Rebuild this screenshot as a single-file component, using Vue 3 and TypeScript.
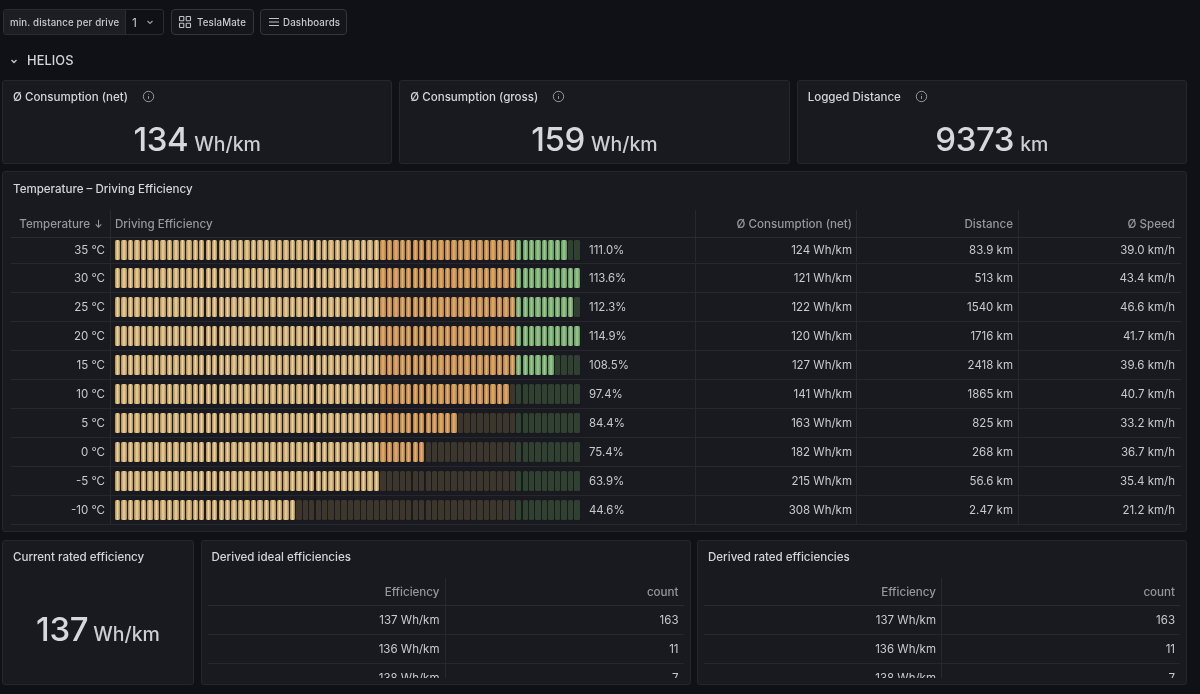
<script setup lang="ts">
interface Row { temp: string; lit: number; pct: string; cons: string; dist: string; speed: string }
const rows: Row[] = [
  { temp: '35 °C', lit: 70, pct: '111.0%', cons: '124 Wh/km', dist: '83.9 km', speed: '39.0 km/h' },
  { temp: '30 °C', lit: 72, pct: '113.6%', cons: '121 Wh/km', dist: '513 km', speed: '43.4 km/h' },
  { temp: '25 °C', lit: 71, pct: '112.3%', cons: '122 Wh/km', dist: '1540 km', speed: '46.6 km/h' },
  { temp: '20 °C', lit: 72, pct: '114.9%', cons: '120 Wh/km', dist: '1716 km', speed: '41.7 km/h' },
  { temp: '15 °C', lit: 68, pct: '108.5%', cons: '127 Wh/km', dist: '2418 km', speed: '39.6 km/h' },
  { temp: '10 °C', lit: 61, pct: '97.4%', cons: '141 Wh/km', dist: '1865 km', speed: '40.7 km/h' },
  { temp: '5 °C', lit: 53, pct: '84.4%', cons: '163 Wh/km', dist: '825 km', speed: '33.2 km/h' },
  { temp: '0 °C', lit: 48, pct: '75.4%', cons: '182 Wh/km', dist: '268 km', speed: '36.7 km/h' },
  { temp: '-5 °C', lit: 41, pct: '63.9%', cons: '215 Wh/km', dist: '56.6 km', speed: '35.4 km/h' },
  { temp: '-10 °C', lit: 28, pct: '44.6%', cons: '308 Wh/km', dist: '2.47 km', speed: '21.2 km/h' },
]
const stats = [
  { title: 'Ø Consumption (net)', value: '134', unit: 'Wh/km' },
  { title: 'Ø Consumption (gross)', value: '159', unit: 'Wh/km' },
  { title: 'Logged Distance', value: '9373', unit: 'km' },
]
const derived = [
  { title: 'Derived ideal efficiencies' },
  { title: 'Derived rated efficiencies' },
]
const counts = [
  { eff: '137 Wh/km', count: '163' },
  { eff: '136 Wh/km', count: '11' },
  { eff: '138 Wh/km', count: '7' },
]
const cellIdx = Array.from({ length: 72 }, (_, i) => i)
function cellClass(i: number, lit: number): string {
  const tone = i >= 62 ? 'green' : i >= 41 ? 'orange' : 'yellow'
  return `${tone} ${i < lit ? 'lit' : 'dim'}`
}
</script>

<template>
  <div class="page">
    <div class="topbar">
      <div class="var">
        <span class="var-label">min. distance per drive</span>
        <span class="var-value">1
          <svg class="chev" viewBox="0 0 12 12"><path d="M3.5 5l2.5 2.5L8.500 5" /></svg>
        </span>
      </div>
      <div class="btn btn-apps">
        <svg class="ico" viewBox="0 0 14 14">
          <rect x="1.500" y="1.500" width="4.300" height="4.300" rx=".6" />
          <rect x="8.200" y="1.500" width="4.300" height="4.300" rx=".6" />
          <rect x="1.500" y="8.200" width="4.300" height="4.300" rx=".6" />
          <rect x="8.200" y="8.200" width="4.300" height="4.300" rx=".6" />
        </svg>
        TeslaMate
      </div>
      <div class="btn btn-dash">
        <svg class="ico" viewBox="0 0 14 14"><path d="M2 3.500h10M2 7h10M2 10.500h10" /></svg>
        Dashboards
      </div>
    </div>

    <div class="section">
      <svg class="chev sec-chev" viewBox="0 0 12 12"><path d="M3.500 5l2.500 2.500L8.500 5" /></svg>
      HELIOS
    </div>

    <div class="stats">
      <div v-for="s in stats" :key="s.title" class="panel stat">
        <div class="title">
          {{ s.title }}
          <svg class="info" viewBox="0 0 12 12">
            <circle cx="6" cy="6" r="4.800" />
            <path d="M6 5.600v2.600M6 3.600v.6" />
          </svg>
        </div>
        <div class="big"><span class="num">{{ s.value }}</span><span class="unit">{{ s.unit }}</span></div>
      </div>
    </div>

    <div class="panel main">
      <div class="title">Temperature – Driving Efficiency</div>
      <div class="tbl">
        <div class="tr th">
          <div class="td r">Temperature
            <svg class="arrow" viewBox="0 0 12 12"><path d="M6 2v8M3 7l3 3 3-3" /></svg>
          </div>
          <div class="td">Driving Efficiency</div>
          <div class="td r">Ø Consumption (net)</div>
          <div class="td r">Distance</div>
          <div class="td r">Ø Speed</div>
        </div>
        <div v-for="row in rows" :key="row.temp" class="tr body">
          <div class="td r">{{ row.temp }}</div>
          <div class="td gauge">
            <div class="bar">
              <span v-for="i in cellIdx" :key="i" class="cell" :class="cellClass(i, row.lit)"></span>
            </div>
            <span class="pct">{{ row.pct }}</span>
          </div>
          <div class="td r">{{ row.cons }}</div>
          <div class="td r">{{ row.dist }}</div>
          <div class="td r">{{ row.speed }}</div>
        </div>
      </div>
    </div>

    <div class="bottom">
      <div class="panel stat current">
        <div class="title">Current rated efficiency</div>
        <div class="big mid"><span class="num">137</span><span class="unit">Wh/km</span></div>
      </div>
      <div v-for="d in derived" :key="d.title" class="panel small">
        <div class="title">{{ d.title }}</div>
        <div class="stbl">
          <div class="str th">
            <div class="td r">Efficiency</div>
            <div class="td r">count</div>
          </div>
          <div v-for="c in counts" :key="c.eff" class="str body">
            <div class="td r">{{ c.eff }}</div>
            <div class="td r">{{ c.count }}</div>
          </div>
        </div>
      </div>
    </div>
  </div>
</template>

<style>
html, body { background: #101116; }
</style>

<style scoped>
.page {
  box-sizing: border-box;
  width: 1200px;
  height: 694px;
  overflow: hidden;
  padding: 9px 13px 0 2px;
  background: #101116;
  color: #ccccd4;
  font-family: Inter, "Liberation Sans", sans-serif;
  font-size: 12px;
  filter: blur(.3px);
}
.topbar { display: flex; height: 26px; gap: 7px; margin-left: 1px; font-size: 9.700px; font-weight: 500; letter-spacing: .15px; white-space: nowrap; }
.var { display: flex; border: 1px solid #2a2c32; border-radius: 3px; width: 161px; box-sizing: border-box; }
.var-label { width: 122px; background: #1c1e23; border-right: 1px solid #2a2c32; display: flex; align-items: center; padding-left: 6px; box-sizing: border-box; color: #c8c9cf; }
.var-value { flex: 1; display: flex; align-items: center; padding-left: 6px; font-size: 12px; font-weight: 400; gap: 7px; color: #c8c9cf; }
.chev { width: 12px; height: 12px; fill: none; stroke: #9a9ba1; stroke-width: 1.200; }
.btn { display: flex; align-items: center; box-sizing: border-box; border: 1px solid #34363c; border-radius: 4px; color: #c8c9cf; background: #15161b; }
.btn-apps { width: 83px; padding-left: 6px; gap: 5px; }
.btn-dash { width: 87px; margin-left: -1px; padding-left: 6px; gap: 2px; }
.ico { width: 14px; height: 14px; fill: none; stroke: #c0c1c7; stroke-width: 1.100; }
.section { height: 45px; display: flex; align-items: center; font-size: 12.800px; font-weight: 500; color: #d4d5da; gap: 7px; padding-left: 6px; box-sizing: border-box; padding-top: 6px; letter-spacing: .1px; }
.sec-chev { stroke: #c8c9cf; stroke-width: 1.300; }
.panel { box-sizing: border-box; background: #181a1f; border: 1px solid #25272c; border-radius: 3px; overflow: hidden; }
.title { height: 31px; display: flex; align-items: center; padding-left: 10px; box-sizing: border-box; font-weight: 500; font-size: 11.550px; color: #d4d5da; gap: 14px; }
.stats { display: grid; grid-template-columns: repeat(3, 1fr); gap: 7px; height: 84px; }
.info { width: 13px; height: 13px; fill: none; stroke: #9b9ca2; stroke-width: .9; }
.big { display: flex; justify-content: center; align-items: baseline; gap: 6px; color: #d6d8dd; margin-top: 6px; }
.num { font-size: 33px; font-weight: 500; line-height: 42px; letter-spacing: -.4px; }
.unit { font-size: 19.500px; font-weight: 500; color: #cdced3; }
.main { height: 361px; margin-top: 7px; padding: 0 5px 0 8px; }
.main .title { height: 38px; padding-left: 2px; padding-bottom: 5px; }
.tr { display: grid; grid-template-columns: 100px 585px 161px 162px 161px; }
.th { height: 28px; color: #96979d; font-weight: 500; font-size: 11.600px; border-bottom: 1px solid #2a2c31; box-sizing: border-box; }
.td { display: flex; align-items: center; padding: 0 5px; min-width: 0; box-sizing: border-box; border-right: 1px solid #26282d; white-space: nowrap; }
.td:last-child { border-right: 0; }
.r { justify-content: flex-end; }
.td:nth-child(2):not(.r) { padding-left: 4px; }
.td:nth-child(3).r { padding-right: 4px; }
.arrow { width: 11px; height: 11px; fill: none; stroke: #96979d; stroke-width: 1.100; margin-left: 3px; margin-right: 1px; }
.body { height: 29px; border-bottom: 1px solid #26282d; box-sizing: border-box; font-size: 11.500px; color: #c9cad0; }
.tr.body:nth-child(2) { height: 26px; padding-bottom: 1px; }
.gauge { gap: 9px; }
.bar { display: flex; width: 465px; height: 20px; gap: 1.100px; flex: none; filter: blur(.35px); }
.cell { flex: 1; border-radius: 1.500px; }
.yellow.lit { background: linear-gradient(90deg, #ab8a52, #edd397 50%, #ab8a52); }
.orange.lit { background: linear-gradient(90deg, #a87c44, #e8ae64 50%, #a87c44); }
.green.lit { background: linear-gradient(90deg, #62905c, #9bca91 50%, #62905c); }
.yellow.dim, .orange.dim { background: #3d362c; }
.green.dim { background: #314131; }
.pct { font-size: 11.400px; }
.bottom { display: grid; grid-template-columns: 192px 1fr 1fr; column-gap: 6.500px; height: 145px; margin-top: 8px; }
.bottom .title { height: 31px; padding-left: 10px; }
.mid { margin-top: 36px; gap: 5px; }
.small { padding: 0 6px 6px 6px; }
.small .title { padding-left: 4px; margin-bottom: 6px; }
.stbl { height: 100px; overflow: hidden; }
.str { display: grid; grid-template-columns: 238px 1fr; }
.str.th { height: 28px; }
.str.body { height: 29px; }
</style>
